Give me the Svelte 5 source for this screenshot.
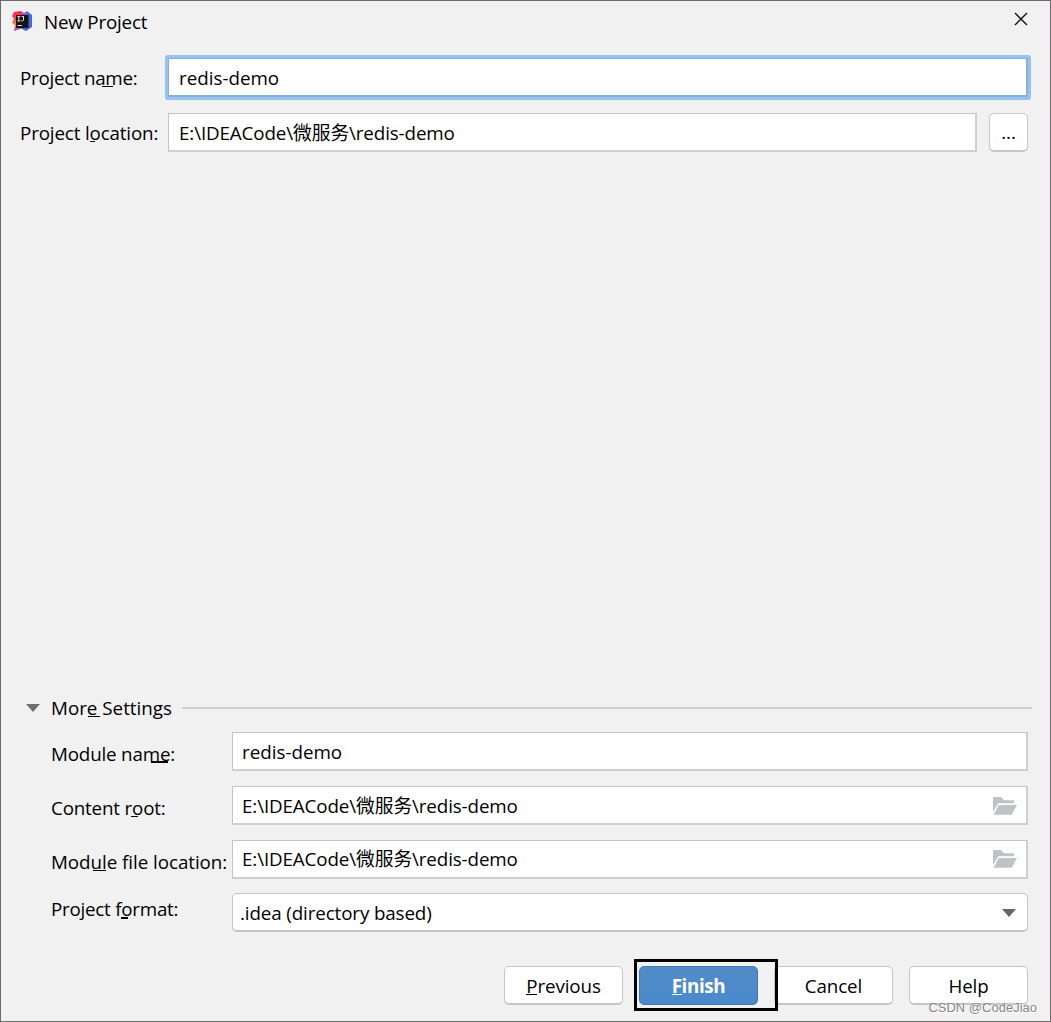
<script lang="ts">
  let projectName = 'redis-demo';
  let projectLocation = 'E:\\IDEACode\\微服务\\redis-demo';
  let moduleName = 'redis-demo';
  let contentRoot = projectLocation;
  let moduleLocation = projectLocation;
</script>

{#snippet folder()}
  <svg class="folder" width="24" height="18" viewBox="0 0 24 18">
    <path d="M0 0H8L11 3.3H21V6.3H5.3L0 15Z" fill="#bdc3c7" />
    <path d="M5.8 8H24L18.7 17.8H0.5Z" fill="#bdc3c7" />
  </svg>
{/snippet}

<div class="dialog">
  <header>
    <svg class="logo" width="21" height="21" viewBox="0 0 21 21">
      <defs>
        <linearGradient id="warm" x1="0" y1="0" x2="0" y2="1">
          <stop offset="0" stop-color="#fb2454" />
          <stop offset="0.4" stop-color="#f94a4f" />
          <stop offset="0.65" stop-color="#fb8a34" />
          <stop offset="1" stop-color="#9540d6" />
        </linearGradient>
        <linearGradient id="cool" x1="0" y1="0" x2="1" y2="1">
          <stop offset="0" stop-color="#9463bb" />
          <stop offset="0.5" stop-color="#4768dd" />
          <stop offset="1" stop-color="#326cea" />
        </linearGradient>
      </defs>
      <path d="M2 1L9 0L14 4L11 17L2 20L3 14L0 12L2 8L0 5Z" fill="url(#warm)" />
      <path d="M11 3L15 0L20 4L20 16L14 20L8 17Z" fill="url(#cool)" />
      <rect x="4" y="4" width="12.5" height="13" fill="#161316" />
      <path d="M5.3 5.6H8.3M6.8 5.6V10M5.3 10H8.3M9.5 5.6H12M11.5 5.6V9Q11.2 10.4 9.2 9.8M5.5 14.5H10" fill="none" stroke="#ddd" />
    </svg>
    <h1>New Project</h1>
    <svg class="close" width="14" height="14" viewBox="0 0 14 14">
      <path d="M1 1L13 13M13 1L1 13" stroke="#111" stroke-width="1.4" />
    </svg>
  </header>

  <div class="row name-row">
    <label for="name" class="name-label">Project name:<i></i></label>
    <input id="name" class="name focused" bind:value={projectName} />
  </div>
  <div class="row location-row">
    <label for="location" class="location-label">Project location:<i></i></label>
    <input id="location" bind:value={projectLocation} />
    <button class="browse">...</button>
  </div>

  <section>
    <div class="more">
      <svg width="14" height="8" viewBox="0 0 14 8"><path d="M0 0H14L7 8Z" fill="#6e6e6e" /></svg>
      <h2>More Settings<i></i></h2>
      <hr />
    </div>
    <div class="settings">
      <div class="row">
        <label for="module" class="module-label">Module name:<i></i></label>
        <input id="module" class="name" bind:value={moduleName} />
      </div>
      <div class="row">
        <label for="root" class="root-label">Content root:<i></i></label>
        <div class="field"><input id="root" bind:value={contentRoot} />{@render folder()}</div>
      </div>
      <div class="row">
        <label for="file" class="file-label">Module file location:<i></i></label>
        <div class="field"><input id="file" class="raised" bind:value={moduleLocation} />{@render folder()}</div>
      </div>
      <div class="row format-row">
        <label for="format" class="format-label">Project format:<i></i></label>
        <button id="format" class="combo">
          <span>.idea (directory based)</span>
          <svg width="14" height="8" viewBox="0 0 14 8"><path d="M0 0H14L7 8Z" fill="#666" /></svg>
        </button>
      </div>
    </div>
  </section>

  <footer>
    <button class="previous"><span>Previous<i></i></span></button>
    <button class="finish"><span>Finish<i></i></span></button>
    <button class="cancel"><span>Cancel</span></button>
    <button class="help"><span>Help</span></button>
    <div class="highlight"></div>
  </footer>
  <div class="watermark">CSDN @CodeJiao</div>
</div>

<style>
  :global(body) {
    margin: 0;
  }
  .dialog {
    position: relative;
    box-sizing: border-box;
    display: flex;
    flex-direction: column;
    width: 1051px;
    height: 1022px;
    border: 1px solid #6c6a6c;
    background: #f1f1f1;
    color: #000;
    font: 18.8px/24px 'Open Sans', 'Noto Sans CJK SC', sans-serif;
    letter-spacing: -0.12px;
    overflow: hidden;
  }
  header {
    display: flex;
    align-items: center;
    height: 42px;
    padding: 0 22px 0 11px;
  }
  .logo {
    margin-bottom: 1px;
  }
  .close {
    margin: 0 0 6px auto;
  }
  h1,
  h2 {
    position: relative;
    margin: 0;
    font-size: inherit;
    font-weight: 400;
    white-space: nowrap;
  }
  h1 {
    margin-left: 11px;
    letter-spacing: -0.2px;
  }
  .row {
    display: flex;
    align-items: center;
  }
  label {
    position: relative;
    flex: none;
    white-space: nowrap;
  }
  input,
  button {
    box-sizing: border-box;
    height: 39px;
    margin: 0;
    border: 1px solid #c4c4c4;
    background: #fff;
    color: inherit;
    font: inherit;
    letter-spacing: inherit;
    outline: none;
  }
  input {
    flex: 1;
    min-width: 0;
    padding: 0 10px;
    border-right: 2px solid #cfcfcf;
    border-bottom: 2px solid #cfcfcf;
    border-radius: 0;
  }
  input.name {
    padding-top: 2px;
    letter-spacing: 0;
  }
  input.focused {
    border-color: #87afda;
    box-shadow: 0 0 0 3px #97c3f3;
    border-radius: 1px;
  }
  button {
    padding: 0;
    border: 1.5px solid #c6c6c6;
    border-bottom-width: 2px;
    border-radius: 5px;
  }
  .name-row {
    margin: 15px 22px 0 19px;
  }
  .location-row {
    margin: 16px 22px 0 19px;
  }
  .name-row label,
  .location-row label {
    width: 148px;
    letter-spacing: -0.28px;
  }
  .location-row label {
    letter-spacing: -0.15px;
  }
  .browse {
    width: 39px;
    margin-left: 12px;
  }
  section {
    margin-top: auto;
  }
  .more {
    display: flex;
    align-items: center;
    height: 24px;
    margin: 0 18px 0 25px;
  }
  .more h2 {
    width: 121px;
    margin-left: 11px;
    letter-spacing: 0;
  }
  hr {
    flex: 1;
    height: 2px;
    margin: 0 0 0 10px;
    border: 0;
    background: #cfcfcf;
  }
  .settings {
    display: grid;
    row-gap: 15px;
    margin: 12px 22px 0 50px;
  }
  .settings input {
    padding-left: 9px;
  }
  .settings input.raised {
    padding-bottom: 2px;
  }
  .settings label {
    width: 181px;
    padding-top: 4px;
  }
  .settings .module-label,
  .settings .root-label {
    letter-spacing: -0.18px;
  }
  .settings .file-label {
    letter-spacing: -0.05px;
  }
  .settings .format-label {
    padding: 0 0 8px;
    letter-spacing: -0.24px;
  }
  .format-row {
    margin-top: -1px;
  }
  .field {
    position: relative;
    display: flex;
    flex: 1;
  }
  .folder {
    position: absolute;
    right: 11px;
    top: 11px;
  }
  .raised + .folder {
    top: 10px;
  }
  .combo {
    display: flex;
    flex: 1;
    align-items: center;
    justify-content: space-between;
    padding: 2px 11px 0 7px;
  }
  footer {
    position: relative;
    display: flex;
    gap: 16px;
    justify-content: flex-end;
    margin: 34px 22px 16px 0;
  }
  footer button {
    width: 119px;
    padding-top: 2px;
  }
  footer button span {
    position: relative;
    display: inline-block;
  }
  .finish {
    padding-top: 0;
    border: 1.5px solid #3f77b9;
    background: linear-gradient(#528cc7, #4989cc);
    color: #fff;
    font-weight: 700;
    letter-spacing: -0.35px;
  }
  .highlight {
    position: absolute;
    box-sizing: border-box;
    right: 250px;
    top: -7px;
    width: 144px;
    height: 52px;
    border: 3px solid #000;
  }
  .watermark {
    position: absolute;
    right: 13px;
    bottom: 3px;
    color: #888;
    font: 13px/20px 'Liberation Sans', sans-serif;
    letter-spacing: 0;
    text-shadow: 1px 1px #fff;
  }
  /* mnemonic marks */
  i {
    position: absolute;
    bottom: 3px;
    height: 1px;
    background: currentColor;
  }
  .name-label i {
    left: 82px;
    width: 11px;
  }
  .location-label i {
    left: 70px;
    width: 5px;
  }
  h2 i {
    left: 37px;
    width: 12px;
  }
  .module-label i {
    left: 100px;
    width: 17px;
    height: 2px;
  }
  .root-label i {
    left: 80px;
    width: 7px;
  }
  .file-label i {
    left: 42px;
    width: 13px;
  }
  .format-label i {
    bottom: 10px;
    left: 70px;
    width: 7px;
    height: 2px;
  }
  .previous i {
    left: 0;
    width: 11px;
  }
  .finish i {
    left: 0;
    width: 10px;
  }
</style>
